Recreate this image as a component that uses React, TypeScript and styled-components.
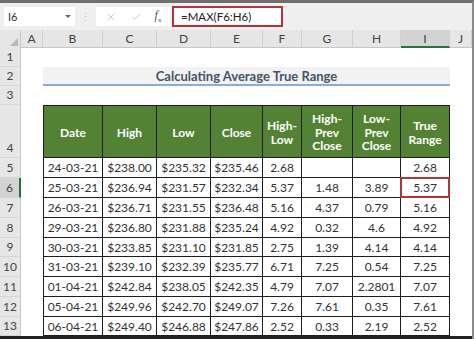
import styled, { createGlobalStyle, css } from 'styled-components';
import { X, Check } from 'lucide-react';

const GlobalStyle = createGlobalStyle`
  html, body {
    margin: 0;
    padding: 0;
    background: #ffffff;
  }
  body {
    font-family: Lato, "Open Sans", sans-serif;
    overflow: hidden;
  }
`;

const COLS = '21px 22px 60px 54px 54px 52px 39px 51px 48px 49px 22px';

const Frame = styled.div`
  width: 474px;
  height: 339px;
  box-sizing: border-box;
  border-top: 3px solid #6f6f6f;
  border-right: 2px solid #8c8c8c;
  display: flex;
  flex-direction: column;
  overflow: hidden;
  background: #ffffff;
`;

const FormulaBar = styled.div`
  height: 27px;
  flex-shrink: 0;
  display: flex;
  align-items: center;
  padding: 0 4px;
  background: #efefef;
`;

const NameBox = styled.div`
  width: 71px;
  height: 19px;
  box-sizing: border-box;
  background: #ffffff;
  display: flex;
  align-items: center;
  justify-content: space-between;
  padding: 0 4px 0 4px;
  font-size: 11px;
  color: #333;
`;

const DropArrow = styled.span`
  width: 0;
  height: 0;
  border-left: 3px solid transparent;
  border-right: 3px solid transparent;
  border-top: 3px solid #666;
`;

const Grip = styled.div`
  width: 21px;
  display: flex;
  justify-content: center;
  color: #c4c4c4;
  font-size: 11px;
`;

const ActionBox = styled.div`
  width: 74px;
  height: 19px;
  background: #ffffff;
  display: flex;
  align-items: center;
  justify-content: space-around;
  padding: 0 2px;
  box-sizing: border-box;
  color: #b8b8b8;
`;

const Fx = styled.span`
  font-family: "Liberation Serif", serif;
  font-style: italic;
  font-size: 12px;
  color: #555;
  sub {
    font-size: 7px;
    font-style: normal;
  }
`;

const FormulaInput = styled.div`
  width: 111px;
  height: 21px;
  box-sizing: border-box;
  margin-left: 2px;
  border: 2px solid #b3333a;
  background: #ffffff;
  display: flex;
  align-items: center;
  padding-left: 7px;
  font-size: 11.5px;
  color: #222;
`;

const SheetRow = styled.div<{ $h: number }>`
  display: grid;
  grid-template-columns: ${COLS};
  height: ${(p) => p.$h}px;
  flex-shrink: 0;
`;

const Corner = styled.div`
  background: #e6e6e6;
  border-right: 1px solid #c6c6c6;
  position: relative;
  &::after {
    content: '';
    position: absolute;
    right: 2px;
    bottom: 2px;
    width: 8px;
    height: 8px;
    background: #b8b8b8;
    clip-path: polygon(100% 0, 100% 100%, 0 100%);
  }
`;

const ColHead = styled.div<{ $active?: boolean }>`
  background: ${(p) => (p.$active ? '#d3d3d3' : '#e6e6e6')};
  border-right: 1px solid #d0d0d0;
  border-bottom: ${(p) => (p.$active ? '2px solid #217346' : '1px solid #c6c6c6')};
  display: flex;
  align-items: center;
  justify-content: center;
  font-size: 12px;
  color: #444;
  box-sizing: border-box;
`;

const RowNum = styled.div<{ $active?: boolean }>`
  background: ${(p) => (p.$active ? '#d3d3d3' : '#e6e6e6')};
  border-right: ${(p) => (p.$active ? '2px solid #217346' : '1px solid #c6c6c6')};
  border-bottom: 1px solid #d6d6d6;
  display: flex;
  align-items: flex-end;
  justify-content: center;
  padding-bottom: 2px;
  font-size: 12px;
  color: #444;
  box-sizing: border-box;
`;

const Blank = styled.div<{ $span?: number }>`
  grid-column: span ${(p) => p.$span ?? 1};
`;

const TitleCell = styled.div`
  grid-column: span 8;
  background: #f2f2f2;
  border-bottom: 2px solid #8ea9db;
  display: flex;
  align-items: center;
  justify-content: center;
  font-weight: 700;
  font-size: 13px;
  color: #44546a;
  box-sizing: border-box;
`;

const tableCell = css<{ $first?: boolean }>`
  box-sizing: border-box;
  border-right: 1px solid #1e1e1e;
  border-bottom: 1px solid #1e1e1e;
  ${(p) => p.$first && 'border-left: 1px solid #1e1e1e;'}
  display: flex;
  align-items: center;
  justify-content: center;
  text-align: center;
`;

const HeadCell = styled.div<{ $first?: boolean }>`
  ${tableCell};
  border-top: 1px solid #1e1e1e;
  background: #548235;
  color: #ffffff;
  font-weight: 700;
  font-size: 12px;
  line-height: 13.5px;
  white-space: pre-line;
  padding-top: 2px;
`;

const DataCell = styled.div<{ $first?: boolean; $selected?: boolean }>`
  ${tableCell};
  background: #ffffff;
  color: #333;
  font-size: 12px;
  position: relative;
  ${(p) =>
    p.$selected &&
    css`
      &::after {
        content: '';
        position: absolute;
        inset: -1px -1px -1px -1px;
        border: 2px solid #b3333a;
      }
    `}
`;

const BottomBand = styled.div`
  flex: 1;
  background: #222;
`;

const letters = ['A', 'B', 'C', 'D', 'E', 'F', 'G', 'H', 'I', 'J'];

const headers = [
  'Date',
  'High',
  'Low',
  'Close',
  'High-\nLow',
  'High-\nPrev\nClose',
  'Low-\nPrev\nClose',
  'True\nRange',
];

const rows = [
  ['24-03-21', '$238.00', '$235.32', '$235.46', '2.68', '', '', '2.68'],
  ['25-03-21', '$236.94', '$231.57', '$232.34', '5.37', '1.48', '3.89', '5.37'],
  ['26-03-21', '$236.71', '$231.55', '$236.48', '5.16', '4.37', '0.79', '5.16'],
  ['29-03-21', '$236.80', '$231.88', '$235.24', '4.92', '0.32', '4.6', '4.92'],
  ['30-03-21', '$233.85', '$231.10', '$231.85', '2.75', '1.39', '4.14', '4.14'],
  ['31-03-21', '$239.10', '$232.39', '$235.77', '6.71', '7.25', '0.54', '7.25'],
  ['01-04-21', '$242.84', '$238.05', '$242.35', '4.79', '7.07', '2.2801', '7.07'],
  ['05-04-21', '$249.96', '$242.70', '$249.07', '7.26', '7.61', '0.35', '7.61'],
  ['06-04-21', '$249.40', '$246.88', '$247.86', '2.52', '0.33', '2.19', '2.52'],
];

const rowHeights = [20, 20, 20, 20, 19, 20, 20, 20, 19];

const App = () => {
  return (
    <>
      <GlobalStyle />
      <Frame>
        <FormulaBar>
          <NameBox>
            <span>I6</span>
            <DropArrow />
          </NameBox>
          <Grip>⋮</Grip>
          <ActionBox>
            <X size={12} strokeWidth={1.5} />
            <Check size={12} strokeWidth={1.5} />
            <Fx>
              f<sub>x</sub>
            </Fx>
          </ActionBox>
          <FormulaInput>=MAX(F6:H6)</FormulaInput>
        </FormulaBar>

        <SheetRow $h={18}>
          <Corner />
          {letters.map((l) => (
            <ColHead key={l} $active={l === 'I'}>
              {l}
            </ColHead>
          ))}
        </SheetRow>

        <SheetRow $h={19}>
          <RowNum>1</RowNum>
          <Blank $span={10} />
        </SheetRow>
        <SheetRow $h={19}>
          <RowNum>2</RowNum>
          <Blank />
          <TitleCell>Calculating Average True Range</TitleCell>
          <Blank />
        </SheetRow>
        <SheetRow $h={19}>
          <RowNum>3</RowNum>
          <Blank $span={10} />
        </SheetRow>
        <SheetRow $h={53}>
          <RowNum>4</RowNum>
          <Blank />
          {headers.map((h, i) => (
            <HeadCell key={h} $first={i === 0}>
              {h}
            </HeadCell>
          ))}
          <Blank />
        </SheetRow>

        {rows.map((r, ri) => (
          <SheetRow key={r[0]} $h={rowHeights[ri]}>
            <RowNum $active={ri === 1}>{ri + 5}</RowNum>
            <Blank />
            {r.map((v, ci) => (
              <DataCell key={ci} $first={ci === 0} $selected={ri === 1 && ci === 7}>
                {v}
              </DataCell>
            ))}
            <Blank />
          </SheetRow>
        ))}
        <BottomBand />
      </Frame>
    </>
  );
};

export default App;
